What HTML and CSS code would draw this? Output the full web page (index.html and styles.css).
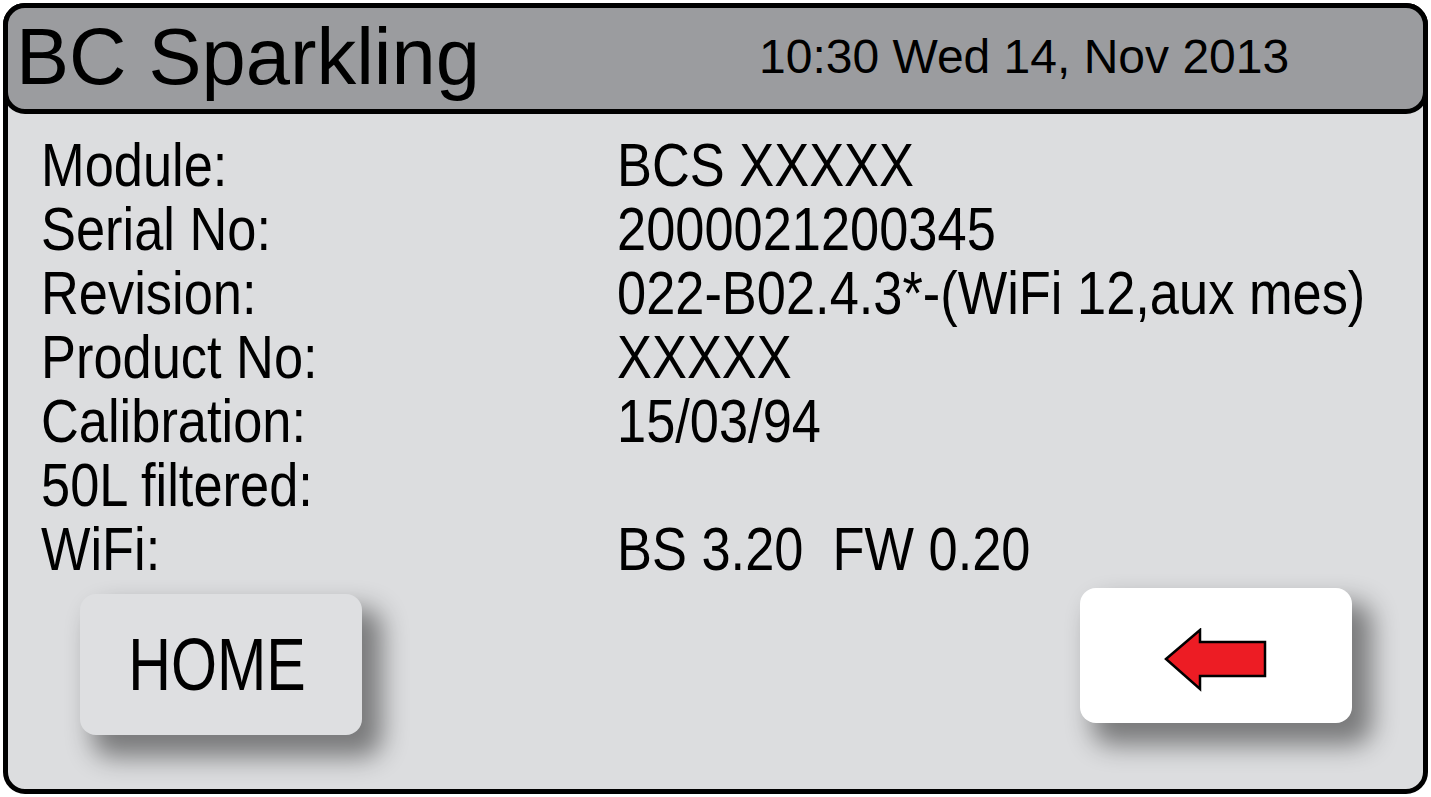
FILE: index.html
```html
<!DOCTYPE html>
<html lang="en">
<head>
    <meta charset="UTF-8">
    <meta name="viewport" content="width=device-width, initial-scale=1.0">
    <title>BC Sparkling - Info</title>
    <link rel="stylesheet" href="styles.css">
</head>
<body>
    <div class="screen">
        <div class="header">
            <span class="title">BC Sparkling</span>
            <span class="clock">10:30 Wed 14, Nov 2013</span>
        </div>
        <div class="info">
            <span class="label">Module:</span><span class="value">BCS XXXXX</span>
            <span class="label">Serial No:</span><span class="value">2000021200345</span>
            <span class="label">Revision:</span><span class="value">022-B02.4.3*-(WiFi 12,aux mes)</span>
            <span class="label">Product No:</span><span class="value">XXXXX</span>
            <span class="label">Calibration:</span><span class="value">15/03/94</span>
            <span class="label">50L filtered:</span><span class="value"></span>
            <span class="label">WiFi:</span><span class="value">BS 3.20&nbsp;&nbsp;FW 0.20</span>
        </div>
        <div class="buttons">
            <button type="button" class="btn btn-home"><span class="narrow">HOME</span></button>
            <button type="button" class="btn btn-back">
                <svg width="104" height="64" viewBox="0 0 104 64">
                    <polygon points="2,31 36,2 36,14 101,14 101,48 36,48 36,61" fill="#ed1c24" stroke="#000" stroke-width="2.5"/>
                </svg>
            </button>
        </div>
    </div>
</body>
</html>
```

FILE: styles.css
```css
body {
    margin: 0;
    padding: 3px;
    background-color: #ffffff;
    font-family: "Liberation Sans", Arial, sans-serif;
}
.screen {
    box-sizing: border-box;
    width: 1425px;
    height: 791px;
    border: 5px solid #000;
    border-radius: 22px;
    background-color: #dcdddf;
}
.header {
    box-sizing: border-box;
    height: 111px;
    margin: -5px -5px 0 -5px;
    border: 5px solid #000;
    border-radius: 22px;
    background-color: #9b9c9f;
    display: flex;
    align-items: center;
    padding: 0 0 3px 8px;
}
.title {
    font-size: 79.5px;
    line-height: 1;
    color: #000;
    width: 743px;
}
.clock {
    font-size: 48px;
    line-height: 1;
    color: #000;
}
.info {
    display: grid;
    grid-template-columns: 576px 1fr;
    padding: 19px 0 0 33px;
    font-size: 62px;
    line-height: 64px;
    color: #000;
    white-space: nowrap;
}
.label,
.value {
    display: inline-block;
    transform: scaleX(0.845);
    transform-origin: left center;
}
.buttons {
    display: flex;
    justify-content: space-between;
    align-items: flex-start;
    padding: 7px 71px 0 72px;
}
.btn {
    border: none;
    border-radius: 16px;
    display: flex;
    align-items: center;
    justify-content: center;
    padding: 0;
    cursor: pointer;
    box-shadow: 16px 18px 26px 4px rgba(0, 0, 0, 0.45);
}
.btn-home {
    width: 282px;
    height: 141px;
    margin-top: 6px;
    background-color: #dedfe1;
    font-family: "Liberation Sans", Arial, sans-serif;
    font-size: 74px;
    color: #000;
}
.narrow {
    display: inline-block;
    transform: scaleX(0.8);
    margin-left: -8px;
}
.btn-back {
    width: 272px;
    height: 135px;
    background-color: #ffffff;
    padding-top: 8px;
}
```
